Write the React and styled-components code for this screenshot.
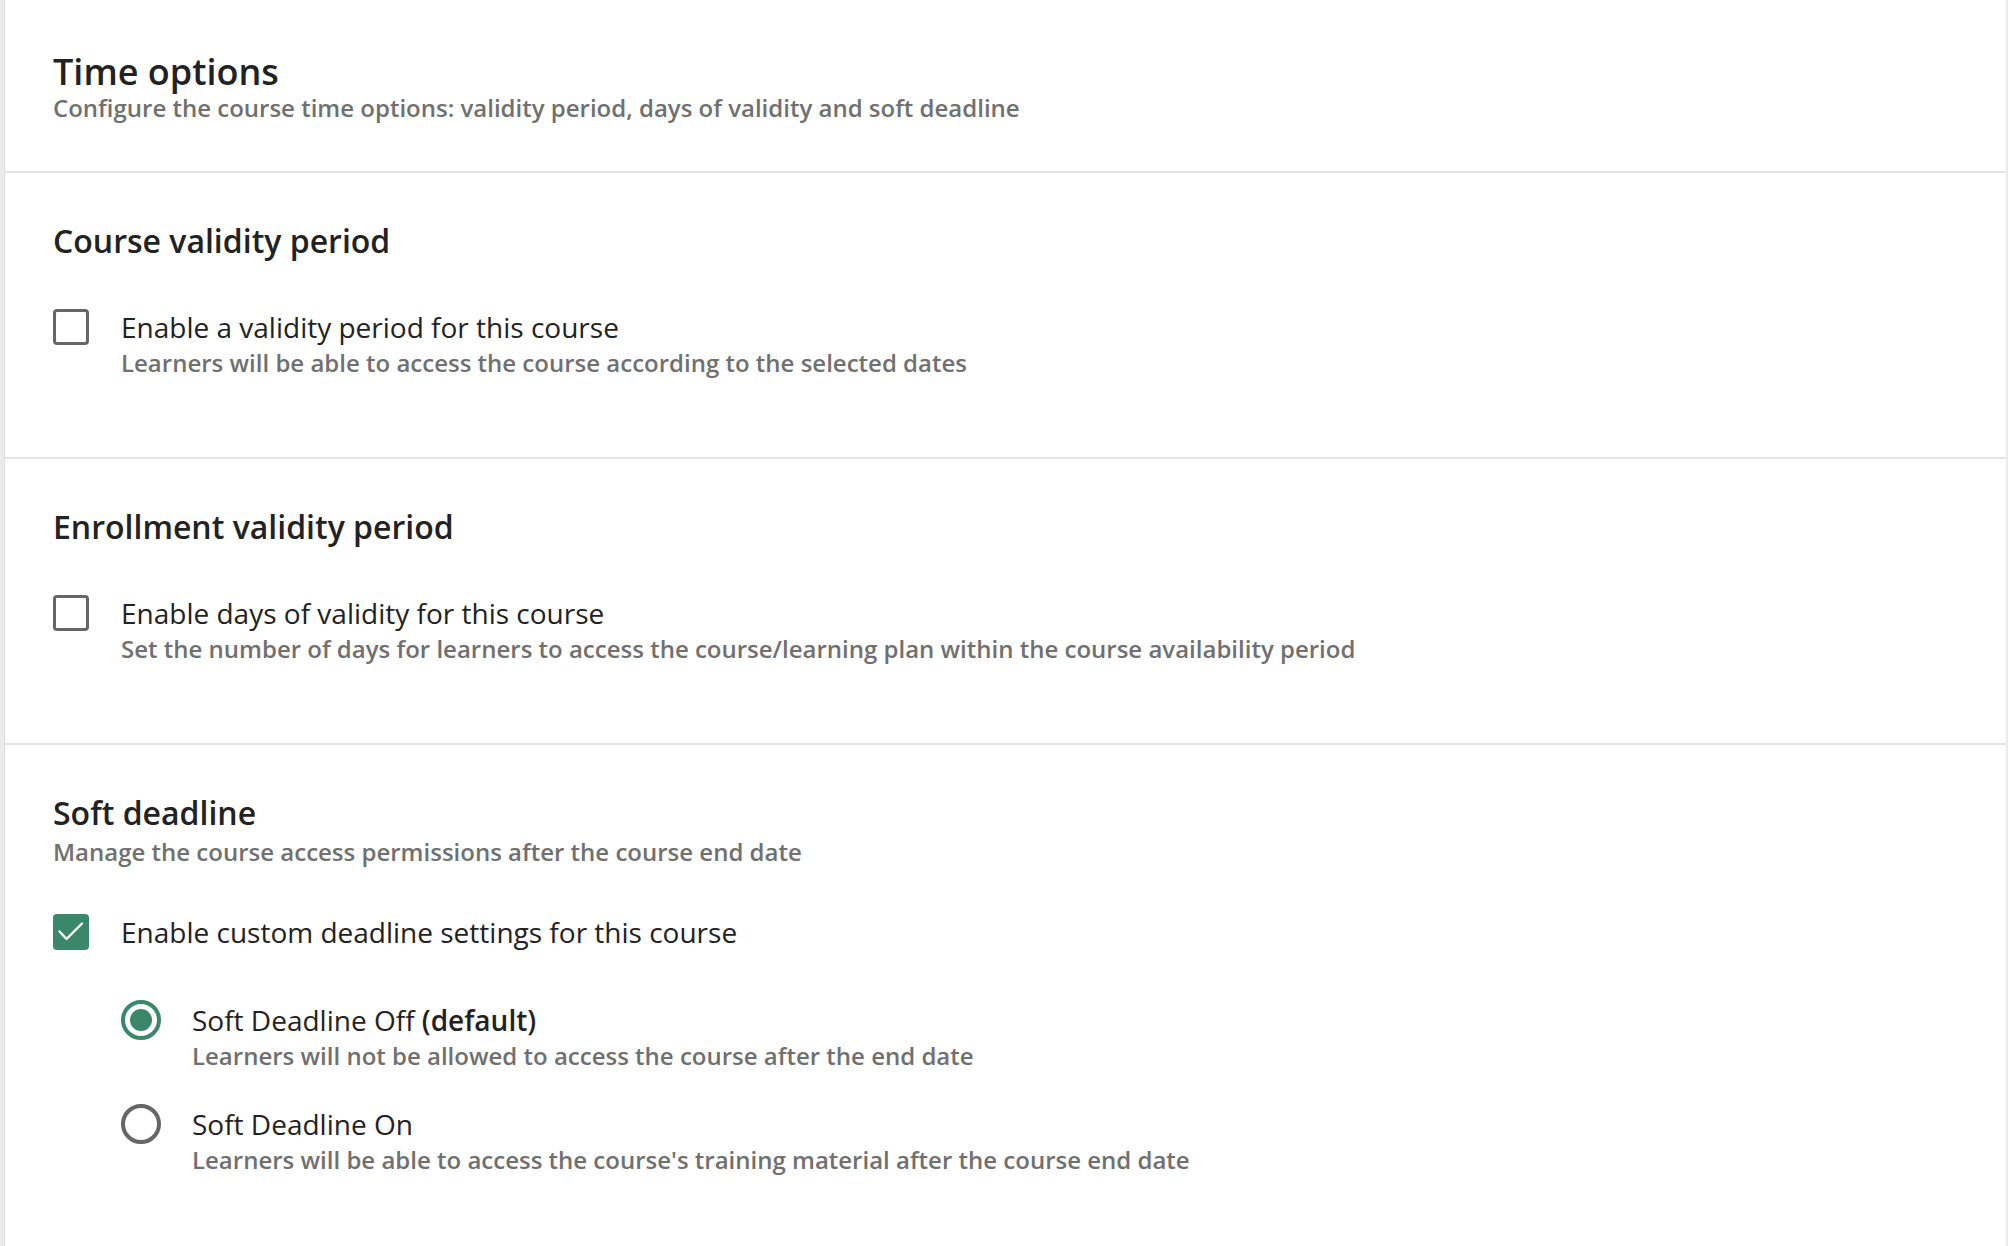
import React, { useState } from 'react';
import styled, { createGlobalStyle } from 'styled-components';

const GlobalStyle = createGlobalStyle`
  html, body {
    margin: 0;
    padding: 0;
    background-color: #ebebeb;
  }
  body {
    font-family: 'Open Sans', 'Noto Sans', 'Liberation Sans', sans-serif;
    color: #222222;
  }
`;

const Panel = styled.div`
  box-sizing: border-box;
  margin: 0 2px 0 4px;
  min-height: 100vh;
  background-color: #ffffff;
  border-left: 1px solid #dcdcdc;
`;

const Section = styled.section`
  box-sizing: border-box;
  padding: ${props => props.header ? '52px 48px 47px' : '46px 48px 78px'};
  border-bottom: ${props => props.last ? 'none' : '2px solid #e4e4e4'};
`;

const PageTitle = styled.h1`
  margin: 0;
  font-size: 36px;
  line-height: 40px;
  font-weight: 600;
  color: #222222;
`;

const SectionTitle = styled.h2`
  margin: 0;
  font-size: 32px;
  line-height: 44px;
  font-weight: 600;
  color: #222222;
`;

const Subtitle = styled.p`
  margin: ${props => props.top || 0}px 0 0;
  font-size: 24px;
  line-height: 32px;
  font-weight: 600;
  color: #707070;
`;

const TitleBlock = styled.div`
  margin-bottom: 44px;
`;

const OptionRow = styled.label`
  display: flex;
  align-items: flex-start;
  gap: ${props => props.radio ? 31 : 32}px;
  cursor: pointer;
  & + & {
    margin-top: 32px;
  }
`;

const Control = styled.span`
  flex: none;
  height: 40px;
  display: flex;
  align-items: center;
`;

const CheckBox = styled.span`
  box-sizing: border-box;
  width: 36px;
  height: 36px;
  border-radius: 4px;
  border: ${props => props.checked ? 'none' : '3px solid #666666'};
  background-color: ${props => props.checked ? '#3b8769' : '#ffffff'};
  display: flex;
  align-items: center;
  justify-content: center;
`;

const RadioCircle = styled.span`
  box-sizing: border-box;
  width: 40px;
  height: 40px;
  border-radius: 50%;
  border: 4px solid ${props => props.checked ? '#3b8769' : '#666666'};
  display: flex;
  align-items: center;
  justify-content: center;
  &::after {
    content: '';
    display: ${props => props.checked ? 'block' : 'none'};
    width: 22px;
    height: 22px;
    border-radius: 50%;
    background-color: #3b8769;
  }
`;

const OptionText = styled.span`
  display: flex;
  flex-direction: column;
`;

const OptionLabel = styled.span`
  font-size: 28px;
  line-height: 40px;
  font-weight: 400;
  color: #222222;
  b {
    font-weight: 600;
  }
`;

const OptionHint = styled.span`
  font-size: 24px;
  line-height: 32px;
  font-weight: 600;
  color: #707070;
`;

const RadioGroup = styled.div`
  margin-top: 48px;
  padding-left: 68px;
`;

const Check = () => (
  <svg width="36" height="36" viewBox="0 0 36 36" fill="none">
    <path d="M6.5 17.5 L13.5 25 L29 9.5" stroke="#ffffff" strokeWidth="2.4" strokeLinecap="round" strokeLinejoin="round" />
  </svg>
);

const Checkbox = ({ checked, onToggle, label, hint }) => (
  <OptionRow onClick={onToggle}>
    <Control>
      <CheckBox checked={checked}>{checked && <Check />}</CheckBox>
    </Control>
    <OptionText>
      <OptionLabel>{label}</OptionLabel>
      {hint && <OptionHint>{hint}</OptionHint>}
    </OptionText>
  </OptionRow>
);

const Radio = ({ checked, onSelect, label, hint }) => (
  <OptionRow radio onClick={onSelect}>
    <Control>
      <RadioCircle checked={checked} />
    </Control>
    <OptionText>
      <OptionLabel>{label}</OptionLabel>
      <OptionHint>{hint}</OptionHint>
    </OptionText>
  </OptionRow>
);

const App = () => {
  const [validity, setValidity] = useState(false);
  const [days, setDays] = useState(false);
  const [custom, setCustom] = useState(true);
  const [soft, setSoft] = useState('off');

  return (
    <>
      <GlobalStyle />
      <Panel>
        <Section header>
          <PageTitle>Time options</PageTitle>
          <Subtitle>Configure the course time options: validity period, days of validity and soft deadline</Subtitle>
        </Section>

        <Section>
          <TitleBlock>
            <SectionTitle>Course validity period</SectionTitle>
          </TitleBlock>
          <Checkbox
            checked={validity}
            onToggle={() => setValidity(!validity)}
            label="Enable a validity period for this course"
            hint="Learners will be able to access the course according to the selected dates"
          />
        </Section>

        <Section>
          <TitleBlock>
            <SectionTitle>Enrollment validity period</SectionTitle>
          </TitleBlock>
          <Checkbox
            checked={days}
            onToggle={() => setDays(!days)}
            label="Enable days of validity for this course"
            hint="Set the number of days for learners to access the course/learning plan within the course availability period"
          />
        </Section>

        <Section last>
          <TitleBlock>
            <SectionTitle>Soft deadline</SectionTitle>
            <Subtitle top={1}>Manage the course access permissions after the course end date</Subtitle>
          </TitleBlock>
          <Checkbox
            checked={custom}
            onToggle={() => setCustom(!custom)}
            label="Enable custom deadline settings for this course"
          />
          <RadioGroup>
            <Radio
              checked={soft === 'off'}
              onSelect={() => setSoft('off')}
              label={<>Soft Deadline Off <b>(default)</b></>}
              hint="Learners will not be allowed to access the course after the end date"
            />
            <Radio
              checked={soft === 'on'}
              onSelect={() => setSoft('on')}
              label="Soft Deadline On"
              hint="Learners will be able to access the course's training material after the course end date"
            />
          </RadioGroup>
        </Section>
      </Panel>
    </>
  );
};

export default App;
